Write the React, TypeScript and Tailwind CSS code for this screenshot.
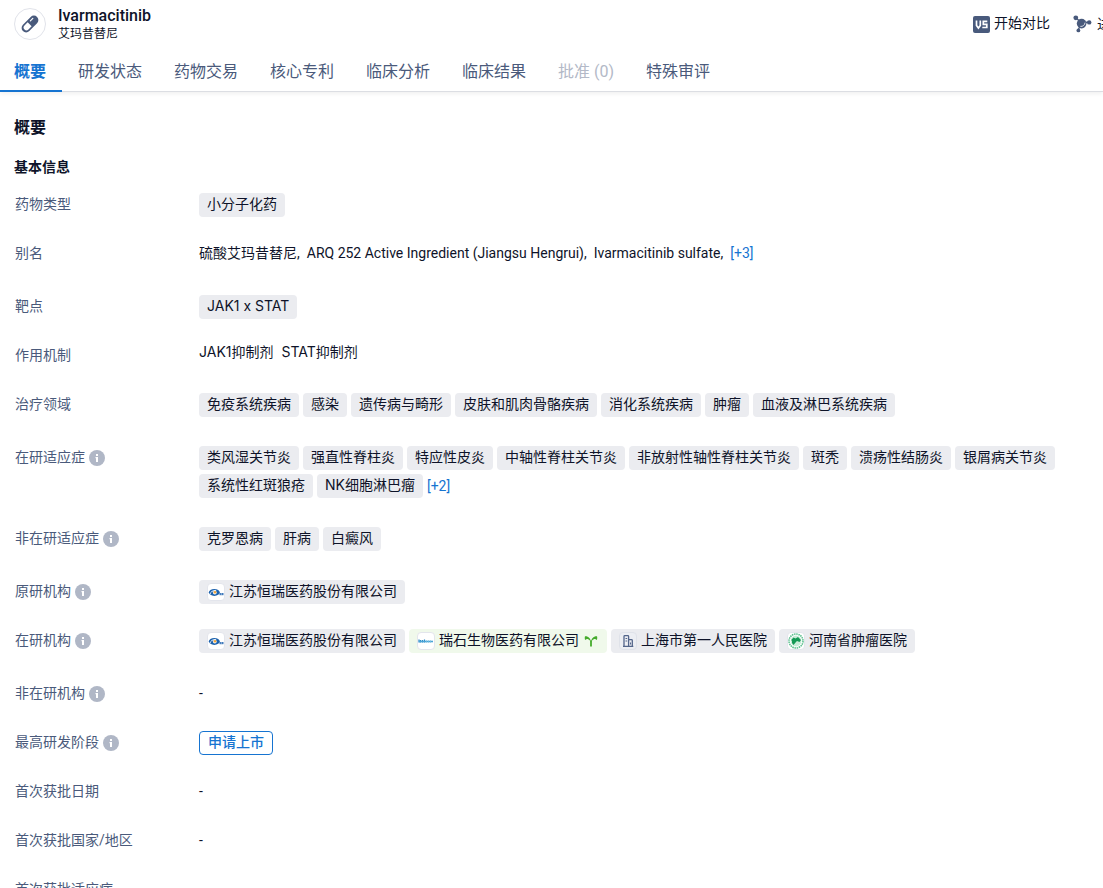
import type { ReactNode } from "react";

type Tag = {
  label: string;
  logo?: ReactNode;
  highlighted?: boolean;
};

type Row = {
  label: string;
  info?: boolean;
  content: ReactNode;
};

const TABS = [
  { label: "概要", active: true },
  { label: "研发状态" },
  { label: "药物交易" },
  { label: "核心专利" },
  { label: "临床分析" },
  { label: "临床结果" },
  { label: "批准 (0)", disabled: true },
  { label: "特殊审评" },
];

function PillIcon() {
  return (
    <svg width="18" height="18" viewBox="0 0 18 18" aria-hidden="true">
      <g transform="rotate(-45 9 9)">
        <rect x="-1" y="4.5" width="20" height="9" rx="4.5" fill="#495a7c" />
        <path d="M8.5 6.2v5.6H4a2.8 2.8 0 0 1 0-5.600z" fill="#fff" />
        <path
          d="M11.500 7h3.500"
          stroke="#fff"
          strokeWidth="1.200"
          strokeLinecap="round"
        />
      </g>
    </svg>
  );
}

function VersusIcon() {
  return (
    <svg width="17" height="17" viewBox="0 0 17 17" aria-hidden="true">
      <rect width="17" height="17" rx="2" fill="#495a7c" />
      <path
        d="M3.500 4.500v5l1.900 2.500 1.900-2.500v-5M14.300 5.300H10.300v3h3.500v3.200H9.300"
        fill="none"
        stroke="#fff"
        strokeWidth="1.700"
      />
    </svg>
  );
}

function MoleculeIcon() {
  return (
    <svg width="19" height="18" viewBox="0 0 19 18" aria-hidden="true">
      <g fill="#495a7c" stroke="#495a7c">
        <path d="M3 3l6 5M9 8l7-1M9 8l-4 7" strokeWidth="1.400" />
        <circle cx="2.800" cy="2.800" r="2.400" stroke="none" />
        <circle cx="16.200" cy="7.400" r="2.200" stroke="none" />
        <circle cx="5.400" cy="15.400" r="1.900" stroke="none" />
        <circle cx="8.600" cy="8.600" r="4.800" stroke="none" />
      </g>
      <path
        d="M12 7.600a4 4 0 0 1-4.600 3.800"
        fill="none"
        stroke="#fff"
        strokeWidth="0.800"
      />
    </svg>
  );
}

function InfoIcon() {
  return (
    <svg width="16" height="16" viewBox="0 0 16 16" aria-hidden="true">
      <circle cx="8" cy="8" r="8" fill="#b0b7c6" />
      <rect x="7" y="4" width="2" height="2" fill="#fff" />
      <path d="M6.500 7H9v5H7V8.200h-.5z" fill="#fff" />
    </svg>
  );
}

function LogoBox({ children }: { children: ReactNode }) {
  return (
    <span className="flex size-[18px] shrink-0 items-center justify-center rounded-sm border border-[#e3e5ec] bg-white">
      {children}
    </span>
  );
}

function HengruiLogo() {
  return (
    <LogoBox>
      <svg width="16" height="16" viewBox="0 0 16 16" aria-hidden="true">
        <ellipse cx="6.300" cy="8.400" rx="5.500" ry="3.500" fill="#1d62ad" />
        <path
          d="M1.800 10.600c.4-2.600 3-4.400 6.400-4.200"
          fill="none"
          stroke="#fff"
          strokeWidth="0.900"
        />
        <circle cx="6.800" cy="8.600" r="1.900" fill="#fff" />
        <circle cx="7" cy="8.300" r="1.300" fill="#f0a63c" />
        <rect x="11.500" y="9" width="4" height="2.200" fill="#3f79bb" />
        <path d="M13.400 9v2.200" stroke="#fff" strokeWidth="0.400" />
      </svg>
    </LogoBox>
  );
}

function ReistoneLogo() {
  return (
    <LogoBox>
      <svg width="16" height="16" viewBox="0 0 16 16" aria-hidden="true">
        <path
          d="M1 6.500v3M2.500 7v2.500M4.500 7v2.500M6.500 6.500v3"
          stroke="#2386c4"
          strokeWidth="1.200"
        />
        <path d="M1 8.500h14" stroke="#4aa3d6" strokeWidth="1.600" />
        <path d="M8.500 7.500v2M10.500 7.500v2M12.500 7.500v2" stroke="#6dbbe0" />
      </svg>
    </LogoBox>
  );
}

function HospitalLogo() {
  return (
    <span className="flex size-[18px] shrink-0 items-center justify-center rounded-sm border border-[#dfe2e9] bg-[#eceef3]">
      <svg
        width="16"
        height="16"
        viewBox="0 0 16 16"
        fill="none"
        stroke="#53658a"
        strokeWidth="1.300"
        aria-hidden="true"
      >
        <path d="M4 13.300V3.500q0-.8.8-.8h3q.8 0 .8.800v9.800M8.600 6.700h2.900q.8 0 .8.800v5.800M3 13.300h10.300" />
        <path d="M5.500 5.500h1.700M5.500 8h1.700M10.500 9.500v2" strokeWidth="1" />
      </svg>
    </span>
  );
}

function HenanLogo() {
  return (
    <LogoBox>
      <svg width="16" height="16" viewBox="0 0 16 16" aria-hidden="true">
        <circle
          cx="8"
          cy="8"
          r="7"
          fill="none"
          stroke="#5cc08f"
          strokeWidth="1.600"
          strokeDasharray="1.500 0.700"
        />
        <circle cx="8" cy="8" r="5.400" fill="#c9ecd9" />
        <path
          d="M3.200 7l2.300-2.500 2 1 2.500-1.500 3 3-1.500 2-2.500-1-1 1-2.500 3-1.500-2v-2z"
          fill="#149955"
        />
      </svg>
    </LogoBox>
  );
}

function SproutIcon() {
  return (
    <svg width="16" height="16" viewBox="0 0 16 16" aria-hidden="true">
      <path d="M8 13.500V7.500" stroke="#45ab2c" strokeWidth="1.800" />
      <path
        d="M7.800 9C7.800 5.500 5.500 3 2 3.200 1.600 4.600 1.700 5.800 2.200 7c1-1 2-1.200 3-.8 1.200.5 1.800 1.300 2.600 2.800z"
        fill="#45ab2c"
      />
      <path
        d="M8.200 9c0-3.500 2.300-6 5.800-5.800.4 1.400.3 2.600-.2 3.800-1-1-2-1.200-3-.8-1.200.5-1.800 1.300-2.600 2.800z"
        fill="#45ab2c"
      />
    </svg>
  );
}

function TagLink({ tag }: { tag: Tag }) {
  return (
    <a
      href="#"
      className={`flex h-6 items-center gap-1 whitespace-nowrap rounded px-2 ${
        tag.highlighted ? "bg-[#f0f9eb]" : "bg-[#ebecf0]"
      }`}
    >
      {tag.logo}
      <span className="pb-0.5">{tag.label}</span>
      {tag.highlighted && <SproutIcon />}
    </a>
  );
}

function TagList({ tags, more }: { tags: Tag[]; more?: string }) {
  return (
    <div className="flex flex-wrap items-center gap-1 font-[Inter,'Noto_Sans_CJK_SC',sans-serif]">
      {tags.map((tag) => (
        <TagLink key={tag.label} tag={tag} />
      ))}
      {more && <MoreButton label={more} />}
    </div>
  );
}

function MoreButton({ label }: { label: string }) {
  return (
    <button
      type="button"
      className="font-[Roboto,'Noto_Sans_CJK_SC',sans-serif] text-[#1674d1]"
    >
      {label}
    </button>
  );
}

const toTags = (labels: string[]): Tag[] => labels.map((label) => ({ label }));

const hengrui: Tag = {
  label: "江苏恒瑞医药股份有限公司",
  logo: <HengruiLogo />,
};

const ROWS: Row[] = [
  { label: "药物类型", content: <TagList tags={toTags(["小分子化药"])} /> },
  {
    label: "别名",
    content: (
      <div className="flex flex-wrap gap-x-[7px] pb-1.5">
        <span>硫酸艾玛昔替尼,</span>
        <span>ARQ 252 Active Ingredient (Jiangsu Hengrui),</span>
        <span>Ivarmacitinib sulfate,</span>
        <MoreButton label="[+3]" />
      </div>
    ),
  },
  { label: "靶点", content: <TagList tags={toTags(["JAK1 x STAT"])} /> },
  {
    label: "作用机制",
    content: (
      <div className="flex flex-wrap gap-x-2 font-[Inter,'Noto_Sans_CJK_SC',sans-serif] leading-4">
        <a href="#">JAK1抑制剂</a>
        <a href="#">STAT抑制剂</a>
      </div>
    ),
  },
  {
    label: "治疗领域",
    content: (
      <div className="pb-1">
        <TagList
          tags={toTags([
            "免疫系统疾病",
            "感染",
            "遗传病与畸形",
            "皮肤和肌肉骨骼疾病",
            "消化系统疾病",
            "肿瘤",
            "血液及淋巴系统疾病",
          ])}
        />
      </div>
    ),
  },
  {
    label: "在研适应症",
    info: true,
    content: (
      <div className="pb-1">
        <TagList
          tags={toTags([
            "类风湿关节炎",
            "强直性脊柱炎",
            "特应性皮炎",
            "中轴性脊柱关节炎",
            "非放射性轴性脊柱关节炎",
            "斑秃",
            "溃疡性结肠炎",
            "银屑病关节炎",
            "系统性红斑狼疮",
            "NK细胞淋巴瘤",
          ])}
          more="[+2]"
        />
      </div>
    ),
  },
  {
    label: "非在研适应症",
    info: true,
    content: (
      <div className="pb-1">
        <TagList tags={toTags(["克罗恩病", "肝病", "白癜风"])} />
      </div>
    ),
  },
  { label: "原研机构", info: true, content: <TagList tags={[hengrui]} /> },
  {
    label: "在研机构",
    info: true,
    content: (
      <div className="pb-1">
        <TagList
          tags={[
            hengrui,
            {
              label: "瑞石生物医药有限公司",
              logo: <ReistoneLogo />,
              highlighted: true,
            },
            { label: "上海市第一人民医院", logo: <HospitalLogo /> },
            { label: "河南省肿瘤医院", logo: <HenanLogo /> },
          ]}
        />
      </div>
    ),
  },
  { label: "非在研机构", info: true, content: "-" },
  {
    label: "最高研发阶段",
    info: true,
    content: (
      <span className="flex h-6 w-fit items-center rounded border border-[#1674d1] px-2 pb-0.5 font-medium text-[#1674d1]">
        申请上市
      </span>
    ),
  },
  { label: "首次获批日期", content: "-" },
  { label: "首次获批国家/地区", content: "-" },
  { label: "首次获批适应症", content: "-" },
];

function Header() {
  return (
    <header className="border-b border-[#dcdee3] shadow-[0_2px_4px_rgba(0,0,0,0.06)]">
      <div className="flex h-12 items-center pl-3.5">
        <span className="flex size-8 shrink-0 items-center justify-center rounded-full border border-[#e1e3ea]">
          <PillIcon />
        </span>
        <div className="ml-3 flex-1 pt-0.5">
          <h1 className="text-base font-medium leading-[18px]">
            Ivarmacitinib
          </h1>
          <p className="text-xs leading-[18px]">艾玛昔替尼</p>
        </div>
        <button type="button" className="flex shrink-0 items-center gap-1">
          <VersusIcon />
          <span className="pb-0.5">开始对比</span>
        </button>
        <button
          type="button"
          className="ml-[23px] flex w-[30px] shrink-0 items-center gap-[5px] overflow-hidden whitespace-nowrap"
        >
          <span className="shrink-0">
            <MoleculeIcon />
          </span>
          <span>进展</span>
        </button>
      </div>
      <nav className="-ml-0.5 flex text-base text-[#4a5a7b]">
        {TABS.map((tab) => (
          <button
            key={tab.label}
            type="button"
            disabled={tab.disabled}
            className={`-mb-px h-11 shrink-0 border-b-2 px-4 pt-1.5 ${
              tab.active
                ? "border-[#1674d1] font-bold text-[#1674d1]"
                : "border-transparent"
            } ${tab.disabled ? "text-[#b3b9c7]" : ""}`}
          >
            {tab.label}
          </button>
        ))}
      </nav>
    </header>
  );
}

export default function App() {
  return (
    <div className="min-h-screen bg-white font-[Roboto,'Noto_Sans_CJK_SC',sans-serif] text-sm text-[#0e1329]">
      <Header />
      <main className="px-3.5 pt-6">
        <h2 className="text-base font-bold leading-6">概要</h2>
        <h3 className="mt-4 font-bold leading-[22px]">基本信息</h3>
        <dl className="mt-[15px] flex flex-col gap-[25px] leading-[22px]">
          {ROWS.map((row) => (
            <div key={row.label} className="flex min-h-6 items-start">
              <dt className="flex h-6 w-[185px] shrink-0 items-center gap-1 pl-px text-[#4a5a7b]">
                <span className="pb-0.5">{row.label}</span>
                {row.info && <InfoIcon />}
              </dt>
              <dd className="min-w-0 flex-1">{row.content}</dd>
            </div>
          ))}
        </dl>
      </main>
    </div>
  );
}
